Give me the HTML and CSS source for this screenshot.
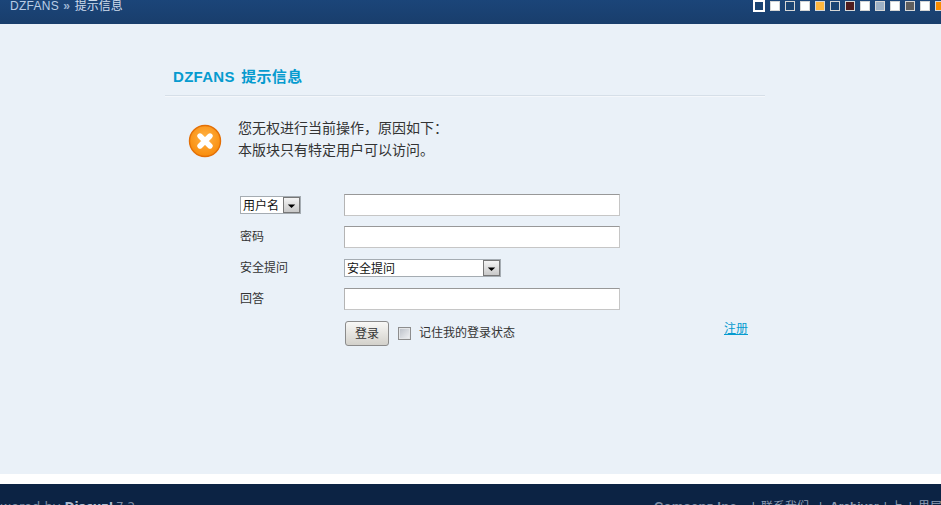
FILE: index.html
```html
<!DOCTYPE html>
<html lang="zh-CN">
<head>
<meta charset="utf-8">
<title>DZFANS 提示信息</title>
<link rel="stylesheet" href="styles.css">
</head>
<body>
<header class="topbar">
  <div class="crumbs"><a href="#">DZFANS</a><b class="sep">»</b>提示信息</div>
  <ul class="swatches">
    <li class="sw sw-active"></li>
    <li class="sw sw-white"></li>
    <li class="sw sw-blue"></li>
    <li class="sw sw-white"></li>
    <li class="sw sw-amber"></li>
    <li class="sw sw-blue"></li>
    <li class="sw sw-maroon"></li>
    <li class="sw sw-white"></li>
    <li class="sw sw-grey"></li>
    <li class="sw sw-white"></li>
    <li class="sw sw-dark"></li>
    <li class="sw sw-white"></li>
    <li class="sw sw-orange"></li>
  </ul>
</header>
<main class="main">
  <section class="card">
    <h1 class="title">DZFANS 提示信息</h1>
    <div class="alert">
      <svg class="alert-icon" width="34" height="34" viewBox="0 0 34 34">
        <defs>
          <radialGradient id="orb" cx="50%" cy="40%" r="60%">
            <stop offset="0" stop-color="#ffb347"/>
            <stop offset="1" stop-color="#f98c0b"/>
          </radialGradient>
        </defs>
        <circle cx="17" cy="17" r="15.5" fill="url(#orb)" stroke="#e36f06" stroke-width="1.4"/>
        <path d="M12 12 22 22M22 12 12 22" stroke="#fff" stroke-width="5.4" stroke-linecap="round"/>
      </svg>
      <div class="alert-text">
        <p>您无权进行当前操作，原因如下：</p>
        <p>本版块只有特定用户可以访问。</p>
      </div>
    </div>
    <form class="login">
      <div class="cell-label cell-top"><span class="select select-small"><span class="select-value">用户名</span><svg class="select-btn" width="17" height="17" viewBox="0 0 17 17"><path d="M4 8h9l-4.5 4z" fill="#000"/></svg></span></div>
      <input class="field" type="text" aria-label="用户名">
      <span></span>
      <label class="cell-label">密码</label>
      <input class="field" type="password" aria-label="密码">
      <span></span>
      <label class="cell-label cell-q">安全提问</label>
      <span class="select select-wide"><span class="select-value">安全提问</span><svg class="select-btn" width="17" height="17" viewBox="0 0 17 17"><path d="M4 8h9l-4.5 4z" fill="#000"/></svg></span>
      <span></span>
      <label class="cell-label">回答</label>
      <input class="field" type="text" aria-label="回答">
      <span></span>
      <span></span>
      <div class="actions">
        <button class="submit" type="button">登录</button>
        <span class="check"></span>
        <span class="remember">记住我的登录状态</span>
      </div>
      <a class="register" href="#">注册</a>
    </form>
  </section>
</main>
<footer class="footer">
  <div class="powered">Powered by <b>Discuz!</b> <span class="ver">7.2</span></div>
  <div class="footlinks"><b class="company">Comsenz Inc.</b><span class="bar">|</span><span class="lnk lnk-contact">联系我们</span><span class="bar">|</span><b class="lnk lnk-arch">Archiver</b><span class="bar">|</span><span class="lnk lnk-top">上</span><span class="bar">|</span><span class="lnk">界层</span></div>
</footer>
</body>
</html>
```
FILE: styles.css
```css
* { box-sizing: border-box; }
html, body { margin: 0; padding: 0; }
body {
  width: 941px;
  height: 505px;
  overflow: hidden;
  background: #fff;
  font: 12px/18px "Liberation Sans", "Noto Sans CJK SC", sans-serif;
  color: #333;
}
.topbar {
  height: 24px;
  background: linear-gradient(#1b4579, #193e6c);
  display: flex;
  justify-content: space-between;
  overflow: hidden;
  color: #cfdcec;
}
.crumbs { margin: -3px 0 0 10px; font-size: 12px; line-height: 18px; }
.crumbs a { color: #b9cde6; text-decoration: none; letter-spacing: .3px; }
.sep { color: #9db5d3; margin: 0 5px 0 4px; }
.swatches {
  list-style: none;
  display: flex;
  gap: 5px;
  margin: 0 -4px 0 0;
  padding: 0;
  height: 12px;
}
.sw { width: 10px; height: 10px; border: 1px solid #d6d6d6; margin-top: 1px; flex: none; }
.sw-active { width: 12px; height: 12px; margin: 0; border: 2px solid #fff; background: #1b4473; }
.sw-white { background: #fff; }
.sw-blue { background: #1b4473; }
.sw-amber { background: #fdb63f; }
.sw-maroon { background: #501c1e; }
.sw-grey { background: #9cb0c6; }
.sw-dark { background: #5f5f5f; }
.sw-orange { background: #f88c00; }

.main { height: 450px; background: #eaf1f8; padding-left: 165px; }
.card { width: 600px; }
.title {
  margin: 0;
  height: 72px;
  padding: 43px 0 0 8px;
  border-bottom: 1px solid #d6dfe8;
  box-shadow: 0 1px 0 #f4f7fb;
  font-size: 15px;
  line-height: 20px;
  font-weight: 700;
  letter-spacing: .3px;
  word-spacing: 2px;
  color: #069bcf;
}
.alert { display: flex; align-items: center; margin: 19px 0 0 23px; gap: 16px; height: 50px; }
.alert-icon { flex: none; margin-top: 2px; }
.alert-text { font-size: 14px; line-height: 22px; color: #333; margin-bottom: 2px; text-spacing-trim: space-all; }
.alert-text p { margin: 0; }
.login {
  display: grid;
  grid-template-columns: 104px 276px 1fr;
  grid-template-rows: 22px 23px 19px 23px 25px;
  row-gap: 10px;
  margin: 29px 0 0 75px;
}
.cell-label { font-size: 12px; line-height: 22px; color: #333; }
.cell-top { display: flex; align-items: flex-start; padding-top: 2px; }
.cell-q { line-height: 18px; }
.field {
  width: 276px;
  height: 22px;
  margin: 0;
  padding: 0 3px;
  background: #fff;
  border: 1px solid #c6c6c6;
  border-top-color: #989898;
  border-left-color: #b4b4b4;
  border-radius: 0;
  outline: 0;
}
.select {
  display: flex;
  justify-content: space-between;
  align-items: center;
  height: 18px;
  background: #fff;
  border: 1px solid #a5acb2;
  color: #111;
  font-size: 12px;
  line-height: 16px;
}
.select-small { width: 61px; }
.select-wide { width: 157px; }
.select-value { padding-left: 2px; margin-top: 1px; }
.select-btn {
  flex: none;
  width: 17px;
  height: 16px;
  background: linear-gradient(#f4f4f4, #c8c8c8);
  border: 1px solid #777;
}
.actions { display: flex; align-items: center; padding-left: 1px; }
.submit {
  width: 44px;
  height: 25px;
  padding: 0;
  border: 1px solid #8b8b8b;
  border-radius: 3px;
  background: linear-gradient(#f8f8f6, #d3d1cb);
  font: 12px/16px "Liberation Sans", "Noto Sans CJK SC", sans-serif;
  color: #333;
}
.check {
  width: 13px;
  height: 13px;
  margin: 0 0 0 9px;
  border: 1px solid #8d8d8d;
  background: linear-gradient(135deg, #b9bec6, #f2f3f5);
  box-shadow: inset 0 0 0 1px #e4e6e8;
}
.remember { margin: -1px 0 0 8px; font-size: 12px; color: #333; }
.register {
  justify-self: end;
  margin: 0 17px 0 0;
  color: #069bcf;
  font-size: 12px;
  line-height: 16px;
  height: 16px;
}

.footer {
  height: 21px;
  margin-top: 10px;
  background: #0c2344;
  display: flex;
  justify-content: space-between;
  overflow: hidden;
  color: #7d8da4;
  padding-top: 15px;
  font-size: 12px;
  line-height: 16px;
}
.powered { margin-left: -15px; white-space: nowrap; font: 13px/16px "DejaVu Sans", sans-serif; }
.powered b { color: #aebccf; font-size: 12px; }
.ver { font-size: 12px; margin-left: -2px; }
.footlinks { display: flex; gap: 6px; margin-right: -1px; white-space: nowrap; }
.company { margin-right: 5px; font-size: 13px; letter-spacing: .25px; color: #7d8da4; }
.bar { color: #93a2b6; }
.lnk { color: #8d9db3; }
.lnk-contact { margin-right: 4px; }
.lnk-arch { margin: 0 -1px 0 2px; }
.lnk-top { margin-left: -2px; }
```
